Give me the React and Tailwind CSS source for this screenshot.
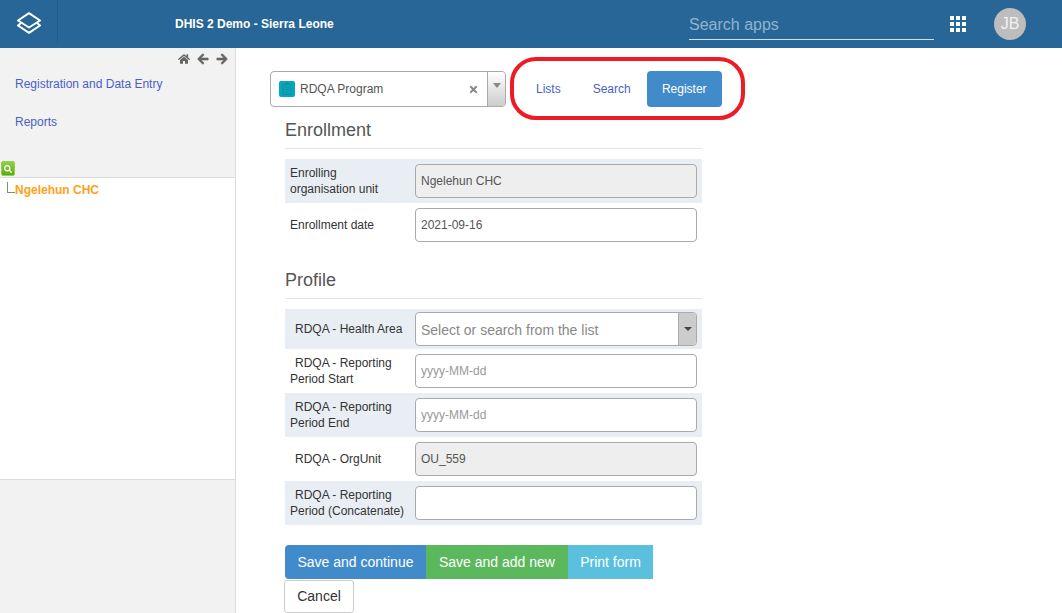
import React from "react";
import { FaHome, FaArrowLeft, FaArrowRight, FaTimes, FaSearch } from "react-icons/fa";

const labelCls = "w-[130px] shrink-0 pl-[5px] text-[12px] leading-4 text-[#333]";
const inputCls = "h-[34px] w-[282px] rounded border border-[#aaa] px-[5px] text-[12px] text-[#555] flex items-center";

const Row = ({ shaded, height = "h-[44px]", label, children }) => (
  <div className={`flex items-center ${height} ${shaded ? "bg-[#e9eef5]" : "bg-white"}`}>
    <div className={labelCls}>{label}</div>
    {children}
  </div>
);

const Field = ({ value, placeholder, disabled }) => (
  <div className={`${inputCls} ${disabled ? "bg-[#eee]" : "bg-white"}`}>
    {placeholder ? <span className="text-[#999]">{placeholder}</span> : value}
  </div>
);

const Logo = () => (
  <svg width="26" height="22" viewBox="0 0 26 22" fill="none" stroke="#fff" strokeWidth="2" strokeLinejoin="round">
    <path d="M13 1.2 L24 8.5 L13 15.5 L2 8.5 Z" />
    <path d="M5 11 L2 13.5 L13 20.8 L24 13.5 L21 11" />
  </svg>
);

const AppsGrid = () => (
  <div className="grid grid-cols-3 gap-[2px] w-[16px]">
    {Array.from({ length: 9 }).map((_, i) => (
      <span key={i} className="block w-[4px] h-[4px] bg-white" />
    ))}
  </div>
);

const ProgramIcon = () => (
  <span className="flex items-center justify-center w-4 h-4 rounded-[2px] bg-[#00a9bd] mr-[5px]">
    <svg width="10" height="12" viewBox="0 0 10 12" fill="none" stroke="#1b8a9a" strokeWidth="1">
      <rect x="1" y="1.5" width="8" height="10" />
      <path d="M3 0.5 H7 M3 4 H7 M3 6.5 H7 M3 9 H6" />
    </svg>
  </span>
);

export default function App() {
  return (
    <div className="h-[613px] w-[1062px] overflow-hidden bg-white font-['Liberation_Sans',Arial,sans-serif]">
      <header className="flex items-center h-[48px] bg-[#276696] text-white">
        <div className="flex items-center justify-center w-[58px] h-[44px] self-start border-r border-[#235d89] pt-[1px]">
          <Logo />
        </div>
        <div className="ml-[117px] w-[514px] text-[12px] font-bold pb-[1px]">DHIS 2 Demo - Sierra Leone</div>
        <div className="self-start w-[245px] h-[40px] border-b border-[#cfe0ec] flex items-center text-[16px] text-[#8fb4d0] pt-[10px]">
          Search apps
        </div>
        <div className="ml-[16px]"><AppsGrid /></div>
        <div className="ml-[28px] flex items-center justify-center w-8 h-8 rounded-full bg-[#bdbdbd] text-[16px] text-[#f2f2f2]">JB</div>
      </header>

      <div className="flex h-[565px]">
        <aside className="flex flex-col w-[236px] shrink-0 border-r border-[#ddd] bg-[#f2f2f2]">
          <div className="flex justify-end items-center gap-[7px] h-[21px] pr-[7px] text-[#666] text-[12px]">
            <FaHome />
            <FaArrowLeft stroke="currentColor" strokeWidth="30" />
            <FaArrowRight stroke="currentColor" strokeWidth="30" />
          </div>
          <nav className="pl-[15px] text-[12px] text-[#4a5fc4]">
            <div className="mt-[7px] leading-4">Registration and Data Entry</div>
            <div className="mt-[22px] leading-4">Reports</div>
          </nav>
          <div className="mt-[31px] ml-[1px] flex items-center justify-center w-[14px] h-[15px] rounded-[2px] bg-gradient-to-b from-[#8fd14a] to-[#5fa80f] border border-[#8fd14a] text-white text-[8px]">
            <FaSearch />
          </div>
          <div className="h-[303px] mt-[1px] border-t border-b border-[#ddd] bg-white">
            <div className="flex items-start pl-[7px] pt-[4px]">
              <span className="w-[8px] h-[11px] border-l border-b border-[#888]" />
              <span className="text-[12px] leading-4 font-bold text-[#ffa11a]">Ngelehun CHC</span>
            </div>
          </div>
        </aside>

        <main className="relative pl-[34px] pt-[23px]">
          <div className="flex items-stretch h-[36px]">
            <div className="flex w-[236px] rounded border border-[#aaa] bg-white">
              <div className="flex flex-1 items-center pl-[8px] pr-[8px] text-[12px] text-[#555]">
                <ProgramIcon />
                <span className="flex-1">RDQA Program</span>
                <FaTimes className="text-[#888] text-[11px]" />
              </div>
              <div className="flex justify-center w-[18px] pt-[11px] border-l border-[#aaa] rounded-r bg-gradient-to-b from-white to-[#ccc]">
                <span className="w-0 h-0 border-x-[4px] border-x-transparent border-t-[5px] border-t-[#888]" />
              </div>
            </div>
            <nav className="ml-[14px] flex items-center text-[12px] text-[#4a5fc4]">
              <span className="px-[16px]">Lists</span>
              <span className="px-[16px]">Search</span>
              <span className="flex items-center justify-center h-full w-[75px] rounded bg-[#428bca] text-white">Register</span>
            </nav>
          </div>

          {/* red annotation around the tabs */}
          <div className="absolute left-[274px] top-[9px] w-[235px] h-[63px] rounded-[26px] border-[4px] border-[#ed1c24]" />

          <section className="ml-[15px] w-[417px]">
            <h2 className="mt-[11px] text-[18px] leading-[24px] text-[#555] pb-[6px] border-b border-[#e5e5e5]">Enrollment</h2>
            <div className="mt-[10px]">
              <Row shaded label={<>Enrolling<br />organisation unit</>}>
                <Field value="Ngelehun CHC" disabled />
              </Row>
              <Row label="Enrollment date">
                <Field value="2021-09-16" />
              </Row>
            </div>

            <h2 className="mt-[21px] text-[18px] leading-[24px] text-[#555] pb-[6px] border-b border-[#e5e5e5]">Profile</h2>
            <div className="mt-[10px]">
              <Row shaded height="h-[40px]" label={<span className="pl-[5px]">RDQA - Health Area</span>}>
                <div className="flex h-[34px] w-[282px] rounded border border-[#aaa] bg-white">
                  <div className="flex-1 flex items-center pl-[5px] pt-[2px] text-[14px] text-[#888]">Select or search from the list</div>
                  <div className="flex items-center justify-center w-[18px] bg-[#ccc] border-l border-[#aaa] rounded-r">
                    <span className="w-0 h-0 border-x-[4px] border-x-transparent border-t-[4px] border-t-[#444]" />
                  </div>
                </div>
              </Row>
              <Row label={<><span className="pl-[5px]">RDQA - Reporting</span><br />Period Start</>}>
                <Field placeholder="yyyy-MM-dd" />
              </Row>
              <Row shaded label={<><span className="pl-[5px]">RDQA - Reporting</span><br />Period End</>}>
                <Field placeholder="yyyy-MM-dd" />
              </Row>
              <Row label={<span className="pl-[5px]">RDQA - OrgUnit</span>}>
                <Field value="OU_559" disabled />
              </Row>
              <Row shaded label={<><span className="pl-[5px]">RDQA - Reporting</span><br />Period (Concatenate)</>}>
                <Field />
              </Row>
            </div>

            <div className="mt-[20px] flex h-[34px] text-[14px] text-white">
              <button className="w-[141px] rounded-l bg-[#428bca]">Save and continue</button>
              <button className="w-[142px] bg-[#5cb85c]">Save and add new</button>
              <button className="w-[85px] bg-[#5bc0de]">Print form</button>
            </div>
            <button className="ml-[-1px] mt-[1px] block w-[70px] h-[33px] rounded-[3px] border border-[#ccc] bg-white text-[14px] text-[#333]">Cancel</button>
          </section>
        </main>
      </div>
    </div>
  );
}
